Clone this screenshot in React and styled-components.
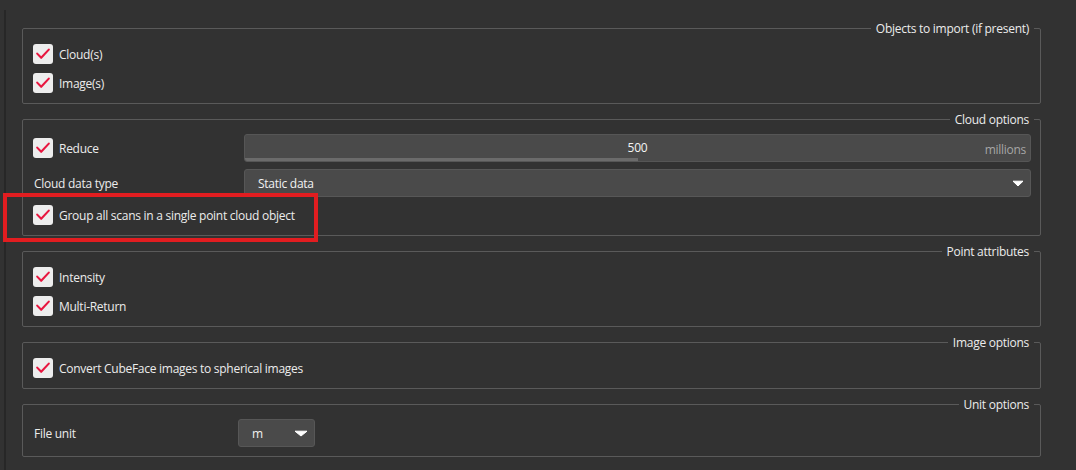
import React from "react";
import styled, { createGlobalStyle } from "styled-components";

const GlobalStyle = createGlobalStyle`
  html, body { margin: 0; padding: 0; background: #323232; }
  body {
    font-family: "Open Sans", "Noto Sans", "DejaVu Sans", sans-serif;
    font-size: 12px;
    letter-spacing: -0.27px;
    color: #ececec;
  }
  * { box-sizing: border-box; }
`;

const Page = styled.div`
  position: relative;
  display: flex;
  width: 1076px;
  height: 470px;
  overflow: hidden;
  background: #323232;
`;

const Splitter = styled.div`
  flex: none;
  width: 2px;
  margin: 10px 16px 0 4px;
  background: #272727;
`;

const Content = styled.div`
  flex: 1;
  display: flex;
  flex-direction: column;
  gap: 15px;
  padding: 28px 35px 0 0;
`;

const Group = styled.div`
  position: relative;
  display: flex;
  flex-direction: column;
  gap: ${(p) => p.$gap ?? 9}px;
  border: 1px solid #5a5a5a;
  border-radius: 2px;
  padding: ${(p) => p.$pt ?? 15}px 9px ${(p) => p.$pb ?? 10}px 10px;
`;

const Title = styled.span`
  position: absolute;
  top: -8px;
  right: 6px;
  padding: 0 5px;
  line-height: 16px;
  background: #323232;
  color: #ececec;
  white-space: nowrap;
`;

const CheckRow = styled.label`
  display: flex;
  align-items: center;
  gap: 6px;
  height: 20px;
  margin-top: ${(p) => p.$mt ?? 0}px;
  white-space: nowrap;
`;

const Box = styled.span`
  flex: none;
  width: 20px;
  height: 20px;
  border-radius: 3px;
  background: #ededed;
  display: flex;
  align-items: center;
  justify-content: center;
`;

const FormGrid = styled.div`
  display: grid;
  grid-template-columns: ${(p) => p.$label}px 1fr;
  grid-auto-rows: 28px;
  row-gap: 7px;
  align-items: center;
`;

const FieldLabel = styled.span`
  padding-left: 1px;
  white-space: nowrap;
`;

const Slider = styled.div`
  height: 28px;
  display: flex;
  flex-direction: column;
  background: #4a4a4a;
  border: 1px solid #565656;
  border-radius: 3px;
  overflow: hidden;
`;

const SliderText = styled.div`
  flex: 1;
  display: grid;
  grid-template-columns: 1fr auto 1fr;
  align-items: center;
  padding: 0 4px;
`;

const SliderValue = styled.span`
  grid-column: 2;
  color: #f4f4f4;
  margin-top: 2px;
`;

const SliderUnit = styled.span`
  grid-column: 3;
  justify-self: end;
  color: #a6a6a6;
  margin-top: 5px;
`;

const SliderFill = styled.div`
  flex: none;
  height: 3px;
  background: #6b6b6b;
`;

const Combo = styled.div`
  height: 28px;
  width: ${(p) => (p.$w ? `${p.$w}px` : "auto")};
  display: flex;
  align-items: center;
  justify-content: space-between;
  padding: 0 6px 0 13px;
  background: #4a4a4a;
  border: 1px solid #575757;
  border-radius: 3px;
  color: #f2f2f2;
`;

const Annotation = styled.div`
  position: absolute;
  left: 3px;
  top: 193px;
  width: 315px;
  height: 49px;
  border: 4px solid #e21d20;
  pointer-events: none;
`;

const Check = () => (
  <Box>
    <svg width="20" height="20" viewBox="0 0 20 20">
      <path
        d="M4.2 9.6 L8.2 13.8 L15.8 5.6"
        fill="none"
        stroke="#e8163f"
        strokeWidth="2.1"
        strokeLinecap="round"
        strokeLinejoin="round"
      />
    </svg>
  </Box>
);

const Arrow = ({ w = 10 }) => (
  <svg width={w + 2} height="7" viewBox={`0 0 ${w + 2} 7`}>
    <path
      d={`M1 1.2 L${w + 1} 1.2 L${w / 2 + 1} 6 Z`}
      fill="#ffffff"
      stroke="#ffffff"
      strokeWidth="1"
      strokeLinejoin="round"
    />
  </svg>
);

const CheckItem = ({ children, mt }) => (
  <CheckRow $mt={mt}>
    <Check />
    <span>{children}</span>
  </CheckRow>
);

export default function App() {
  const value = 500;
  const max = 1000;
  return (
    <Page>
      <GlobalStyle />
      <Splitter />
      <Content>
        <Group>
          <Title>Objects to import (if present)</Title>
          <CheckItem>Cloud(s)</CheckItem>
          <CheckItem>Image(s)</CheckItem>
        </Group>

        <Group $pt={14} $gap={0}>
          <Title>Cloud options</Title>
          <FormGrid $label={211}>
            <CheckRow>
              <Check />
              <span>Reduce</span>
            </CheckRow>
            <Slider>
              <SliderText>
                <SliderValue>{value}</SliderValue>
                <SliderUnit>millions</SliderUnit>
              </SliderText>
              <SliderFill style={{ width: `${(value / max) * 100}%` }} />
            </Slider>
            <FieldLabel>Cloud data type</FieldLabel>
            <Combo>
              <span>Static data</span>
              <Arrow />
            </Combo>
          </FormGrid>
          <CheckItem mt={8}>Group all scans in a single point cloud object</CheckItem>
        </Group>

        <Group>
          <Title>Point attributes</Title>
          <CheckItem>Intensity</CheckItem>
          <CheckItem>Multi-Return</CheckItem>
        </Group>

        <Group>
          <Title>Image options</Title>
          <CheckItem>Convert CubeFace images to spherical images</CheckItem>
        </Group>

        <Group $pt={14} $pb={9}>
          <Title>Unit options</Title>
          <FormGrid $label={205}>
            <FieldLabel>File unit</FieldLabel>
            <Combo $w={77}>
              <span>m</span>
              <Arrow w={12} />
            </Combo>
          </FormGrid>
        </Group>
      </Content>
      <Annotation />
    </Page>
  );
}
